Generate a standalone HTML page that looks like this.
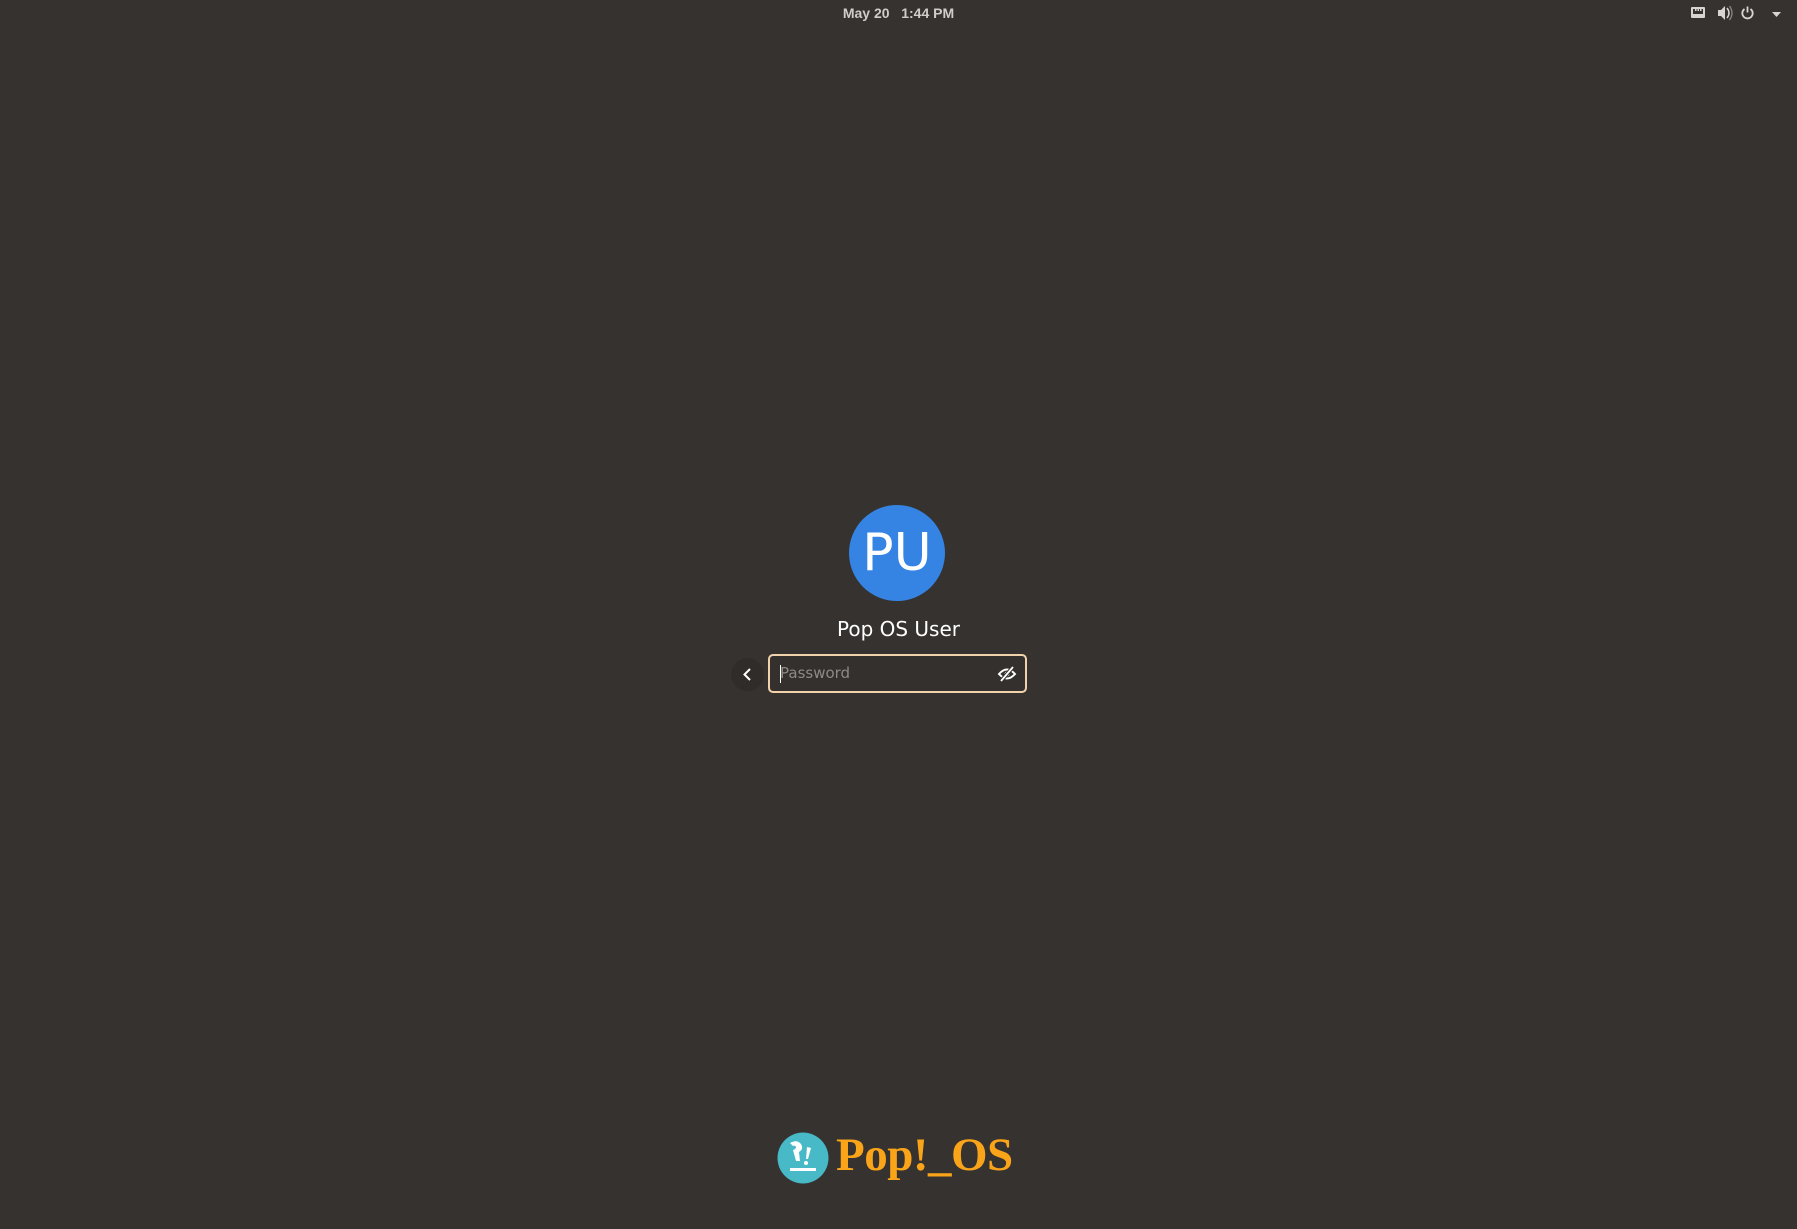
<!DOCTYPE html>
<html><head><meta charset="utf-8"><style>
html,body{margin:0;padding:0;width:1797px;height:1229px;background:#36322f;overflow:hidden;font-family:"Liberation Sans","DejaVu Sans",sans-serif}
.clock{position:absolute;left:0;width:1797px;top:5px;text-align:center;color:#d0cdc9;font-weight:bold;font-size:14px}
.avatar{position:absolute;left:849px;top:505px;width:96px;height:96px;border-radius:50%;background:#3584e4;color:#fff;font-size:52px;text-align:center;line-height:96px;font-family:"DejaVu Sans",sans-serif}
.name{position:absolute;left:0;width:1797px;top:617px;text-align:center;color:#fff;font-size:20px;font-family:"DejaVu Sans",sans-serif}
.back{position:absolute;left:731px;top:658px;width:33px;height:33px;border-radius:50%;background:#302c29}
.entry{position:absolute;left:768px;top:654px;width:255px;height:35px;border:2px solid #f2d2aa;border-radius:5px;background:#33302d}
.ph{position:absolute;left:10px;top:8px;color:#8e8a86;font-size:15px;font-family:"DejaVu Sans",sans-serif}
.cur{position:absolute;left:10px;top:9px;width:1px;height:18px;background:#fff}
.logo{position:absolute;left:836px;top:1127px;color:#faa41a;font-family:"Liberation Serif",serif;font-weight:bold;font-size:47px;line-height:56px;letter-spacing:-0.5px}
</style></head><body>
<div class="clock">May 20&nbsp;&nbsp;&nbsp;1:44 PM</div>
<svg style="position:absolute;left:1690px;top:4px" width="107" height="20" viewBox="0 0 107 20">
<g fill="#d8d5d1">
<rect x="1" y="3" width="14" height="11" rx="1"/>
<rect x="3" y="5" width="10" height="5" fill="#36322f"/>
<rect x="5" y="5" width="1.5" height="2"/><rect x="7.5" y="5" width="1.5" height="2"/><rect x="10" y="5" width="1.5" height="2"/>
<path d="M28 6h3l4-4v14l-4-4h-3z"/>
<path d="M37 4q4 5 0 10" stroke="#d8d5d1" stroke-width="1.5" fill="none"/>
<path d="M39.5 2q5 7 0 14" stroke="#8a8682" stroke-width="1.3" fill="none"/>
<path d="M57.5 2.5v6" stroke="#d8d5d1" stroke-width="1.8" fill="none"/>
<path d="M54.5 5a5.2 5.2 0 1 0 6 0" stroke="#d8d5d1" stroke-width="1.8" fill="none"/>
<path d="M82 8h9l-4.5 5z"/>
</g></svg>
<div class="avatar">PU</div>
<div class="name">Pop OS User</div>
<div class="back"><svg width="33" height="33"><path d="M19 11l-5.5 5.5 5.5 5.5" stroke="#fff" stroke-width="2" fill="none"/></svg></div>
<div class="entry"><div class="cur"></div><div class="ph">Password</div>
<svg style="position:absolute;left:227px;top:8px" width="20" height="20" viewBox="0 0 20 20"><path d="M2 10q8-9 16 0q-8 9-16 0z" stroke="#fff" stroke-width="2" fill="none"/><circle cx="10" cy="10" r="2.5" fill="#fff"/><path d="M4 17L16 3" stroke="#33302d" stroke-width="4"/><path d="M4 17L16 3" stroke="#fff" stroke-width="1.8"/></svg></div>
<svg style="position:absolute;left:777px;top:1132px" width="52" height="52" viewBox="0 0 52 52">
<circle cx="26" cy="26" r="25.5" fill="#48b9c7"/>
<path d="M13 11q7-4 11 1q3 5-2 8l1 9h-4l-3-11q3-1 3-3q-1-2-3-1z" fill="#fff"/>
<path d="M30 15l4 1-3 11h-2z" fill="#fff"/><circle cx="29" cy="31" r="2" fill="#fff"/>
<rect x="13" y="36" width="26" height="3" fill="#fff"/>
</svg>
<div class="logo">Pop!_OS</div>
</body></html>
